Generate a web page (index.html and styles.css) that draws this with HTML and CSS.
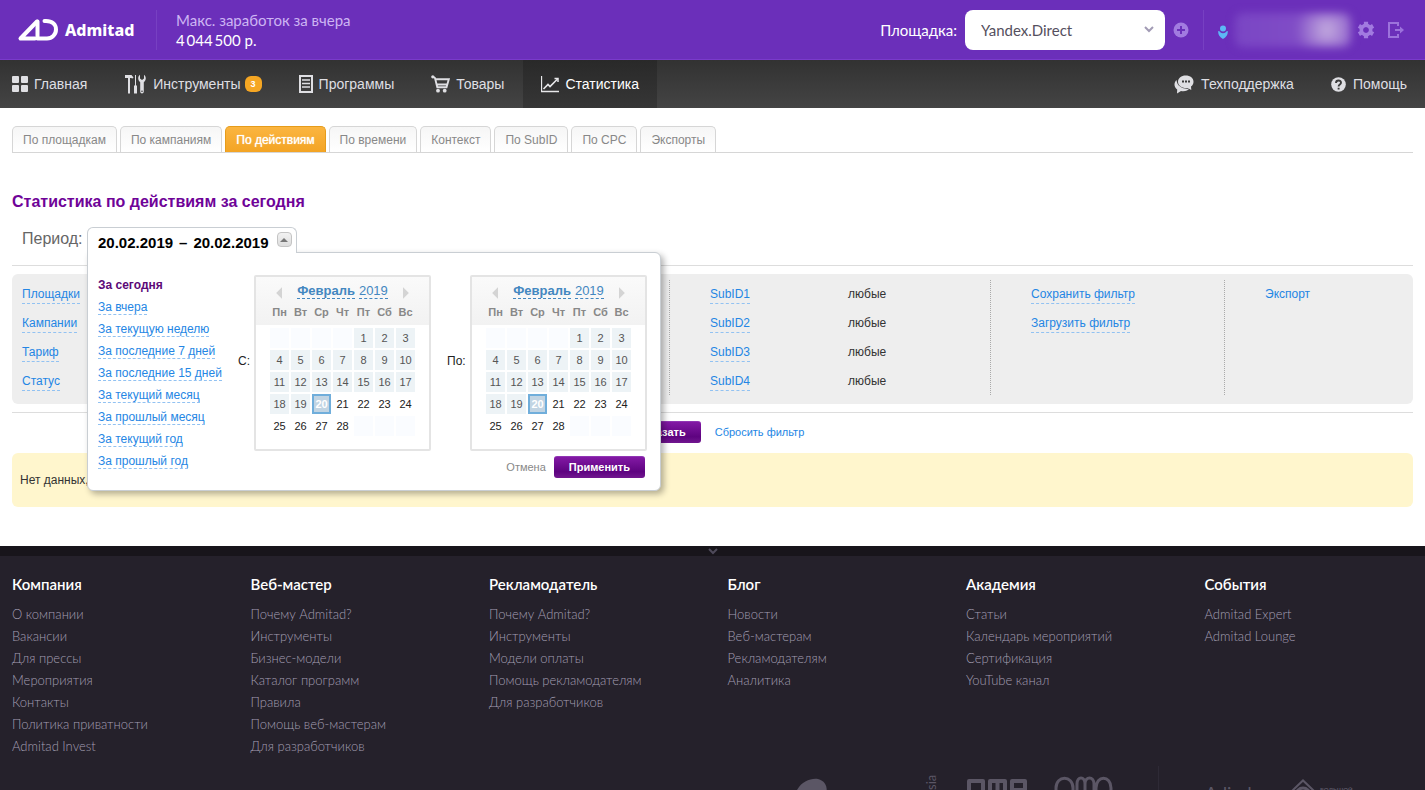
FILE: index.html
```html
<!DOCTYPE html>
<html lang="ru">
<head>
<meta charset="utf-8">
<meta name="viewport" content="width=device-width, initial-scale=1">
<title>Статистика по действиям</title>
<link rel="stylesheet" href="styles.css">
</head>
<body>
<header class="header">
  <a class="logo" href="#">
    <svg width="42" height="24" viewBox="0 0 42 24" fill="none" stroke="#fff" stroke-width="4" stroke-linejoin="round" stroke-linecap="round"><path d="M20 3.500L3.500 20.500H18"/><path d="M20.500 3.500V20.500H30C35 20.500 39 16.500 39 11.500S35 3 29 3H27.500"/></svg>
    <span>Admitad</span>
  </a>
  <div class="earnings">
    <span class="earnings-label">Макс. заработок за вчера</span>
    <span class="earnings-sum">4&#8201;044&#8201;500 р.</span>
  </div>
  <div class="platform">
    <label for="platform">Площадка:</label>
    <select id="platform" class="platform-select"><option>Yandex.Direct</option></select>
    <button class="icon-button" type="button" aria-label="+"><svg width="16" height="16" viewBox="0 0 16 16"><circle cx="8" cy="8" r="7.500" fill="#a27be0"/><path d="M8 4V12M4 8H12" stroke="#6b2fba" stroke-width="2"/></svg></button>
  </div>
  <div class="account">
    <svg class="user" width="10" height="14" viewBox="0 0 10 14" fill="#5db8f5"><circle cx="5" cy="3.500" r="3"/><path d="M.3 6C1.500 5.500 2.500 8.300 5 8.300S8.500 5.500 9.700 6C10.200 9 9 11.500 5 14C1 11.500-.2 9 .3 6Z"/></svg>
    <span class="account-name"></span>
    <button class="icon-button" type="button" aria-label="⚙"><svg width="18" height="18" viewBox="0 0 18 18"><circle cx="9" cy="9" r="4.500" fill="none" stroke="#a27be0" stroke-width="4"/><path d="M9 .8V4M9 14V17.200M1.900 4.900L4.600 6.500M13.400 11.500L16.100 13.100M16.100 4.900L13.400 6.500M4.600 11.500L1.900 13.100" stroke="#a27be0" stroke-width="4.200"/><circle cx="9" cy="9" r="2.700" fill="#6b2fba"/></svg></button>
    <button class="icon-button exit" type="button" aria-label="⎋"><svg width="18" height="18" viewBox="0 0 18 18" fill="none" stroke="#9c72dc" stroke-width="2"><path d="M11 5V2H2V16H11V13"/><path d="M8 9H15" /><path d="M13 5.500L17 9L13 12.500Z" fill="#9c72dc" stroke="none"/></svg></button>
  </div>
</header>

<nav class="nav">
  <a class="nav-item" href="#"><svg width="16" height="16" viewBox="0 0 16 16" fill="#dfdfe3"><rect width="7" height="7" rx="1"/><rect x="9" width="7" height="7" rx="1"/><rect y="9" width="7" height="7" rx="1"/><rect x="9" y="9" width="7" height="7" rx="1"/></svg>Главная</a>
  <a class="nav-item" href="#"><svg class="wide" width="21" height="20" viewBox="0 0 21 20" fill="#dfdfe3"><path d="M0 1H6.500L8.500 3.500L7.500 4.500L6 4H5V19.500H3V4H0ZM10 1H11V11.500H12V19.500H9V11.500H10ZM15 .8V4.500L17 6L19 4.500V.8C21 2 21.500 5.500 19.500 7.500L18.800 8.200V17.500C18.800 20 15.200 20 15.200 17.500V8.200L14.500 7.500C12.500 5.500 13 2 15 .8Z"/><circle cx="17" cy="17.300" r=".8" fill="#3c3c3c"/></svg>Инструменты<span class="badge">3</span></a>
  <a class="nav-item" href="#"><svg width="14" height="18" viewBox="0 0 14 18" fill="none" stroke="#dfdfe3" stroke-width="2"><rect x="1" y="1" width="12" height="16"/><path d="M3 5H11M3 8.500H11M3 12H11" stroke-width="1.500"/></svg>Программы</a>
  <a class="nav-item" href="#"><svg width="19" height="18" viewBox="0 0 19 18" fill="none" stroke="#dfdfe3"><path d="M2 1.700L4 3L6.300 12.200H15.500L17.800 4.300H4.300M6 9.500H16" stroke-width="1.900"/><g fill="#dfdfe3" stroke="none"><circle cx="1.800" cy="1.800" r="1.600"/><circle cx="7" cy="15.700" r="1.900"/><circle cx="13.700" cy="15.700" r="1.900"/></g></svg>Товары</a>
  <a class="nav-item active" href="#"><svg width="18" height="18" viewBox="0 0 18 18" fill="none" stroke="#e8e8ea"><path d="M.5 1V16.500H18" stroke-width="1.300"/><path d="M2.500 14L7 9.500L9 11.500L16.500 4" stroke-width="1.600"/><path d="M13.500 3.500H17V7" stroke-width="1.500"/></svg>Статистика</a>
  <a class="nav-item push" href="#"><svg class="wide" width="20" height="19" viewBox="0 0 20 19"><path d="M2.500 5C-.5 8 0 12 3.200 14.500L3 18.500L7 16C11 16.700 14 15.500 15.500 13.500C10 14.500 3 12 2.500 5Z" fill="#dfdfe3"/><path d="M11.500.5C16.500.5 19.500 3.200 19.500 6.800C19.500 9 18.500 10.600 17 11.600L17.300 15L13.500 13C8 13.500 4 10.800 4 6.800C4 3.200 7.500.5 11.500.5Z" fill="#dfdfe3"/><path d="M8 6.500H10M11 6.500H13M14 6.500H16" stroke="#3c3c3c" stroke-width="2"/></svg>Техподдержка</a>
  <a class="nav-item help" href="#"><svg width="15" height="15" viewBox="0 0 15 15"><circle cx="7.500" cy="7.500" r="7.300" fill="#dfdfe3"/><path d="M5 6C5 2.700 10 2.800 10 5.800C10 7.500 7.600 7.600 7.600 9.400M7.600 10.700V12.500" fill="none" stroke="#3c3c3c" stroke-width="1.900"/></svg>Помощь</a>
</nav>

<main class="content">
  <div class="tabs">
    <a class="tab" href="#">По площадкам</a>
    <a class="tab" href="#">По кампаниям</a>
    <a class="tab active" href="#">По действиям</a>
    <a class="tab" href="#">По времени</a>
    <a class="tab" href="#">Контекст</a>
    <a class="tab" href="#">По SubID</a>
    <a class="tab" href="#">По CPC</a>
    <a class="tab" href="#">Экспорты</a>
  </div>

  <h1 class="title">Статистика по действиям за сегодня</h1>

  <div class="period">
    <span class="period-label">Период:</span>
    <div class="picker">
      <button class="picker-head" type="button"><span>20.02.2019</span><span>–</span><span>20.02.2019</span><i class="picker-toggle"></i></button>
      <div class="popup">
        <ul class="presets">
          <li class="chosen">За сегодня</li>
          <li><a class="dashed" href="#">За вчера</a></li>
          <li><a class="dashed" href="#">За текущую неделю</a></li>
          <li><a class="dashed" href="#">За последние 7 дней</a></li>
          <li><a class="dashed" href="#">За последние 15 дней</a></li>
          <li><a class="dashed" href="#">За текущий месяц</a></li>
          <li><a class="dashed" href="#">За прошлый месяц</a></li>
          <li><a class="dashed" href="#">За текущий год</a></li>
          <li><a class="dashed" href="#">За прошлый год</a></li>
        </ul>
        <div class="popup-main">
          <div class="ranges">
            <span class="range-label from">С:</span>
            <section class="calendar">
              <div class="calendar-head"><button class="arrow prev" type="button" aria-label="←"></button><b>Февраль</b><span>2019</span><button class="arrow next" type="button" aria-label="→"></button></div>
              <table class="days">
                <thead><tr><th>Пн</th><th>Вт</th><th>Ср</th><th>Чт</th><th>Пт</th><th>Сб</th><th>Вс</th></tr></thead>
                <tbody>
                  <tr class="past"><td class="blank"></td><td class="blank"></td><td class="blank"></td><td class="blank"></td><td>1</td><td>2</td><td>3</td></tr>
                  <tr class="past"><td>4</td><td>5</td><td>6</td><td>7</td><td>8</td><td>9</td><td>10</td></tr>
                  <tr class="past"><td>11</td><td>12</td><td>13</td><td>14</td><td>15</td><td>16</td><td>17</td></tr>
                  <tr><td class="gone">18</td><td class="gone">19</td><td class="today">20</td><td>21</td><td>22</td><td>23</td><td>24</td></tr>
                  <tr><td>25</td><td>26</td><td>27</td><td>28</td><td class="blank"></td><td class="blank"></td><td class="blank"></td></tr>
                </tbody>
              </table>
            </section>
            <span class="range-label to">По:</span>
            <section class="calendar">
              <div class="calendar-head"><button class="arrow prev" type="button" aria-label="←"></button><b>Февраль</b><span>2019</span><button class="arrow next" type="button" aria-label="→"></button></div>
              <table class="days">
                <thead><tr><th>Пн</th><th>Вт</th><th>Ср</th><th>Чт</th><th>Пт</th><th>Сб</th><th>Вс</th></tr></thead>
                <tbody>
                  <tr class="past"><td class="blank"></td><td class="blank"></td><td class="blank"></td><td class="blank"></td><td>1</td><td>2</td><td>3</td></tr>
                  <tr class="past"><td>4</td><td>5</td><td>6</td><td>7</td><td>8</td><td>9</td><td>10</td></tr>
                  <tr class="past"><td>11</td><td>12</td><td>13</td><td>14</td><td>15</td><td>16</td><td>17</td></tr>
                  <tr><td class="gone">18</td><td class="gone">19</td><td class="today">20</td><td>21</td><td>22</td><td>23</td><td>24</td></tr>
                  <tr><td>25</td><td>26</td><td>27</td><td>28</td><td class="blank"></td><td class="blank"></td><td class="blank"></td></tr>
                </tbody>
              </table>
            </section>
          </div>
          <div class="popup-actions">
            <button class="cancel" type="button">Отмена</button>
            <button class="primary" type="button">Применить</button>
          </div>
        </div>
      </div>
    </div>
  </div>

  <div class="filters">
    <div class="filter-group">
      <div class="filter-row"><a class="dashed" href="#">Площадки</a></div>
      <div class="filter-row"><a class="dashed" href="#">Кампании</a></div>
      <div class="filter-row"><a class="dashed" href="#">Тариф</a></div>
      <div class="filter-row"><a class="dashed" href="#">Статус</a></div>
    </div>
    <div class="filter-group">
      <div class="filter-row"><a class="dashed" href="#">SubID1</a><span>любые</span></div>
      <div class="filter-row"><a class="dashed" href="#">SubID2</a><span>любые</span></div>
      <div class="filter-row"><a class="dashed" href="#">SubID3</a><span>любые</span></div>
      <div class="filter-row"><a class="dashed" href="#">SubID4</a><span>любые</span></div>
    </div>
    <div class="filter-group">
      <div class="filter-row"><a class="dashed" href="#">Сохранить фильтр</a></div>
      <div class="filter-row"><a class="dashed" href="#">Загрузить фильтр</a></div>
    </div>
    <div class="filter-group">
      <div class="filter-row"><a href="#">Экспорт</a></div>
    </div>
  </div>

  <div class="actions">
    <button class="primary" type="button">Показать</button>
    <a class="reset" href="#">Сбросить фильтр</a>
  </div>

  <p class="notice">Нет данных,</p>
</main>

<footer class="footer">
  <div class="footer-strip"><svg width="10" height="7" viewBox="0 0 10 7" fill="none" stroke="#4e4a5a" stroke-width="2"><path d="M1 1L5 5L9 1"/></svg></div>
  <div class="footer-columns">
    <div><h2>Компания</h2><a href="#">О компании</a><a href="#">Вакансии</a><a href="#">Для прессы</a><a href="#">Мероприятия</a><a href="#">Контакты</a><a href="#">Политика приватности</a><a href="#">Admitad Invest</a></div>
    <div><h2>Веб-мастер</h2><a href="#">Почему Admitad?</a><a href="#">Инструменты</a><a href="#">Бизнес-модели</a><a href="#">Каталог программ</a><a href="#">Правила</a><a href="#">Помощь веб-мастерам</a><a href="#">Для разработчиков</a></div>
    <div><h2>Рекламодатель</h2><a href="#">Почему Admitad?</a><a href="#">Инструменты</a><a href="#">Модели оплаты</a><a href="#">Помощь рекламодателям</a><a href="#">Для разработчиков</a></div>
    <div><h2>Блог</h2><a href="#">Новости</a><a href="#">Веб-мастерам</a><a href="#">Рекламодателям</a><a href="#">Аналитика</a></div>
    <div><h2>Академия</h2><a href="#">Статьи</a><a href="#">Календарь мероприятий</a><a href="#">Сертификация</a><a href="#">YouTube канал</a></div>
    <div><h2>События</h2><a href="#">Admitad Expert</a><a href="#">Admitad Lounge</a></div>
  </div>
  <div class="partners">
    <svg width="628" height="50" viewBox="0 0 628 50">
      <path d="M0 24C5 15 14 12 21 13C29 15 31 22 29 29H0Z" fill="#5b5665"/>
      <text class="partner-side" transform="translate(139 24) rotate(-90)">sia</text>
      <g fill="none" stroke="#5b5665" stroke-width="4" stroke-linejoin="round"><path d="M172 34V15H186V34M193 34V15H208V34M200.500 15V34M215 34V15H228V24H215"/></g>
      <g fill="none" stroke="#5b5665" stroke-width="3"><path d="M259 34V22C259 9 276 9 276 22V34M280 34V18C280 10 288 10 288 18V34M288 18C288 10 297 10 297 18V34M299 34V22C299 9 314 9 314 22V34"/></g>
      <path d="M361.500 0V50" stroke="#2e2a36"/>
      <text class="partner-name" x="408" y="34">Adindex</text>
      <path d="M496 24L506 14.500L516 24L526 34M496 24L487 34" fill="none" stroke="#5b5665" stroke-width="2"/><circle cx="506" cy="29" r="7" fill="none" stroke="#5b5665" stroke-width="3"/>
      <text class="partner-small" x="523" y="26">БОЛЬШОЙ</text>
    </svg>
  </div>
</footer>
</body>
</html>
```
FILE: styles.css
```css
* { box-sizing: border-box; }

body {
  margin: 0;
  height: 100vh;
  overflow: hidden;
  display: flex;
  flex-direction: column;
  background: #fff;
  color: #333;
  font: 12px/16px "Liberation Sans", Arial, sans-serif;
}

a { color: #2486e4; text-decoration: none; }
button, select { margin: 0; font: inherit; }
button { border: 0; padding: 0; background: none; cursor: pointer; }
svg { flex: none; display: block; }

/* Header */
.header {
  flex: none;
  display: flex;
  align-items: center;
  height: 60px;
  padding: 0 20px 0 17px;
  background: #6b2fba;
  border-bottom: 1px solid #7a3bcb;
  color: #fff;
  font: 15px/20px Lato, sans-serif;
}
.logo { display: flex; align-items: center; gap: 6px; width: 139px; color: #fff; font-family: "Noto Sans", sans-serif; font-size: 16px; font-weight: 800; }
.earnings { display: flex; flex-direction: column; height: 40px; padding-left: 19px; border-left: 1px solid #7740c2; }
.earnings-label { color: #cdb5f3; }
.platform { display: flex; align-items: center; gap: 8px; margin-left: auto; }
.platform-select {
  width: 200px;
  height: 40px;
  padding: 0 16px;
  appearance: none;
  border: 0;
  border-radius: 8px;
  color: #55505e;
  background: #fff url("data:image/svg+xml,%3Csvg xmlns='http://www.w3.org/2000/svg' width='10' height='7' fill='none' stroke='%23a29bb5' stroke-width='2'%3E%3Cpath d='M1 1L5 5L9 1'/%3E%3C/svg%3E") no-repeat right 11px center;
}
.account { display: flex; align-items: center; height: 40px; margin-left: 14px; padding-left: 14px; border-left: 1px solid #7740c2; }
.user { margin-top: 4px; }
.account-name {
  width: 116px;
  height: 34px;
  margin: 0 6px 0 7px;
  border-radius: 8px;
  background: radial-gradient(circle 32px at 92px 17px, #c4acdf, transparent), linear-gradient(90deg, #7a46c4, #8552c8);
  filter: blur(4px);
}
.exit { margin-left: 12px; }

/* Main navigation */
.nav {
  flex: none;
  display: flex;
  gap: 1px;
  height: 48px;
  background: linear-gradient(#323232, #444);
  font-size: 14px;
}
.nav-item { display: flex; align-items: center; gap: 6px; padding: 0 18px; color: #dfdfe3; }
.nav-item:first-child { padding: 0 19px 0 12px; }
.nav-item .wide { margin-right: 1px; }
.nav-item.active { background: linear-gradient(#292929, #363636); color: #fff; }
.nav-item.push { margin-left: auto; }
.nav-item.help { gap: 7px; }
.badge {
  width: 17px;
  margin-left: -2px;
  border-radius: 6px;
  background: #f5a623;
  color: #fff;
  font: bold 9px/16px "Liberation Sans", Arial, sans-serif;
  text-align: center;
}

/* Content */
.content { flex: none; padding: 18px 12px 39px; }
.tabs { display: flex; gap: 3px; border-bottom: 1px solid #d6d6d6; }
.tab {
  padding: 6px 10px 5px;
  border: 1px solid #d6d6d6;
  border-bottom: 0;
  border-radius: 5px 5px 0 0;
  background: linear-gradient(#f6f6f6, #fff);
  color: #888;
  line-height: 14px;
}
.tab.active { background: linear-gradient(#fbb540, #f3a424); border-color: #e69c1b; color: #fff; text-shadow: 0 0 1px #fff; }
.title { margin: 39px 0 15px; color: #6f0398; font-size: 16px; line-height: 20px; }

.period { display: flex; height: 39px; padding-left: 10px; border-bottom: 1px solid #ddd; }
.period-label { width: 65px; color: #666; font-size: 16px; line-height: 24px; }
.picker { position: relative; }
.picker-head {
  position: relative;
  z-index: 2;
  display: flex;
  gap: 6px;
  align-items: center;
  height: 26px;
  padding: 4px 4px 0 10px;
  border: 1px solid #c9ced3;
  border-bottom: 0;
  border-radius: 6px 6px 0 0;
  background: #fff;
  color: #000;
  font-size: 15px;
  font-weight: bold;
}
.picker-toggle {
  display: grid;
  place-items: center;
  width: 15px;
  height: 15px;
  margin: 0 0 6px 2px;
  border: 1px solid #c4c4c4;
  border-radius: 4px;
  background: linear-gradient(#f2f2f2, #ddd);
}
.picker-toggle::before { content: ""; border: 4px solid transparent; border-top: 0; border-bottom-color: #777; }
.popup {
  position: absolute;
  z-index: 1;
  top: 25px;
  left: 0;
  display: flex;
  padding: 22px 13px 12px 10px;
  border: 1px solid #c9ced3;
  border-radius: 0 6px 6px 6px;
  background: #fff;
  box-shadow: 3px 3px 6px rgba(0, 0, 0, .3);
}
.presets { display: flex; flex-direction: column; width: 140px; margin: 0; padding: 2px 0 0; list-style: none; }
.presets li { height: 22px; white-space: nowrap; }
.presets .chosen { color: #5c0a78; font-weight: bold; }
.dashed { display: inline-block; border-bottom: 1px dashed #92c2f2; line-height: 13px; }
.ranges { display: flex; align-items: center; }
.range-label { padding-bottom: 4px; color: #222; }
.range-label.from { width: 16px; }
.range-label.to { width: 39px; padding-left: 16px; }
.calendar { width: 177px; height: 176px; border: 2px solid #e4e4e4; border-radius: 2px; background: linear-gradient(#fafafa, #f2f2f2 48px, #fff 48px); }
.calendar-head { display: flex; justify-content: center; gap: 4px; padding-top: 5px; color: #4387c0; font-size: 13px; line-height: 17px; }
.calendar-head b, .calendar-head span { height: 17px; border-bottom: 1px dashed #4387c0; }
.arrow { width: 6px; height: 12px; margin: 5px 0 1px; background: #d4d4d4; }
.arrow.prev { margin-right: 11px; clip-path: polygon(100% 0, 100% 100%, 0 50%); }
.arrow.next { margin-left: 11px; clip-path: polygon(0 0, 100% 50%, 0 100%); }
.days { margin-left: 12px; border-spacing: 2px; table-layout: fixed; font-size: 11px; line-height: 16px; }
.days th, .days td { width: 19px; height: 20px; padding: 0; text-align: center; }
.days th { height: 24px; padding-bottom: 5px; color: #888; }
.days td { color: #222; }
.days .past td, .days .gone { background: #edf3f6; color: #555; }
.days .blank, .days .past .blank { background: #fafcff; }
.days .today { border: 2px solid #70aedb; background: #c1d4e3; color: #fff; font-weight: bold; }
.popup-actions { display: flex; justify-content: flex-end; align-items: center; gap: 8px; padding: 5px 2px 0 0; font-size: 11px; }
.cancel { color: #888; }
.primary {
  height: 22px;
  padding: 0 15px 1px;
  border-radius: 3px;
  border-top: 1px solid #9036b4;
  background: linear-gradient(#8319a5, #5e0380 70%, #71178f);
  color: #fff;
  font-size: 11px;
  font-weight: bold;
}

.filters {
  display: grid;
  grid-template-columns: 657fr 321fr 234fr 189fr;
  margin: 8px 0;
  padding: 6px 0 9px;
  border-radius: 6px;
  background: #eee;
}
.filter-group { display: flex; flex-direction: column; gap: 11px; min-height: 115px; padding: 7px 0 0 40px; border-left: 1px dotted #aaa; }
.filter-group:first-child { padding-left: 10px; border-left: 0; }
.filter-row { display: grid; grid-template-columns: 138px 1fr; justify-items: start; align-items: start; height: 18px; line-height: 15px; white-space: nowrap; }
.filter-row .dashed { height: 17px; line-height: 15px; }
.actions { display: flex; justify-content: center; align-items: center; gap: 14px; padding-top: 8px; border-top: 1px solid #ddd; font-size: 11px; }
.notice { margin: 10px 0 0; padding: 19px 8px; border-radius: 6px; background: #fff6cd; }

/* Footer */
.footer { flex: 1 0 auto; background: #25212b; font-family: Lato, sans-serif; }
.footer-strip { display: flex; justify-content: center; height: 10px; padding-top: 2px; background: #18151b; }
.footer-columns { display: grid; grid-template-columns: repeat(6, 1fr); gap: 30px; padding: 18px 12px 0; }
.footer h2 { margin: 0 0 9px; color: #fff; font-size: 15px; font-weight: 600; line-height: 20px; }
.footer-columns a { display: block; color: #a39eb2; font-size: 13px; font-weight: 300; line-height: 22px; white-space: nowrap; }
.partners { display: flex; justify-content: flex-end; padding-top: 9px; }
.partners text { fill: #5b5665; }
.partner-side { font-size: 13px; }
.partner-name { font-size: 18px; }
.partner-small { font-size: 6px; font-weight: bold; }
```
